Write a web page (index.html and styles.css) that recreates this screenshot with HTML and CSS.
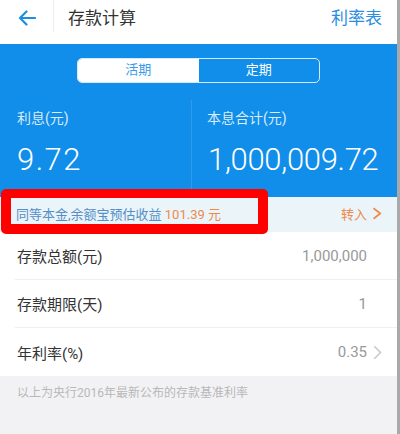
FILE: index.html
```html
<!DOCTYPE html>
<html lang="zh-CN">
<head>
<meta charset="utf-8">
<title>存款计算</title>
<link rel="stylesheet" href="styles.css">
</head>
<body>
<div class="page">
  <header class="topbar">
    <div class="back">
      <svg width="18" height="16" viewBox="0 0 18 16"><path d="M17 8H2M8.5 1.5L2 8l6.5 6.5" fill="none" stroke="#1a8fe6" stroke-width="2.2" stroke-linecap="round" stroke-linejoin="round"/></svg>
    </div>
    <div class="sep"></div>
    <div class="title">存款计算</div>
    <div class="rates">利率表</div>
  </header>

  <section class="hero">
    <div class="toggle">
      <div class="seg active">活期</div>
      <div class="seg">定期</div>
    </div>
    <div class="stats">
      <div class="stat left">
        <div class="stat-label">利息(元)</div>
        <div class="stat-value small">9.72</div>
      </div>
      <div class="stat right">
        <div class="stat-label">本息合计(元)</div>
        <div class="stat-value big">1,000,009.72</div>
      </div>
    </div>
  </section>

  <div class="infobar">
    <div class="info-text">同等本金,余额宝预估收益 <span class="orange">101.39 元</span></div>
    <div class="transfer">转入
      <svg width="10" height="13" viewBox="0 0 10 13"><path d="M1.5 1.2L8.3 6.5 1.5 11.8" fill="none" stroke="#ee8a4e" stroke-width="1.8" stroke-linejoin="round"/></svg>
    </div>
  </div>

  <div class="rows">
    <div class="row">
      <span class="label">存款总额(元)</span>
      <span class="value">1,000,000</span>
      <span class="chev"></span>
    </div>
    <div class="row">
      <span class="label">存款期限(天)</span>
      <span class="value">1</span>
      <span class="chev"></span>
    </div>
    <div class="row">
      <span class="label">年利率(%)</span>
      <span class="value">0.35</span>
      <span class="chev"><svg width="9" height="15" viewBox="0 0 9 15"><path d="M1.3 1.3L7.5 7.5 1.3 13.7" fill="none" stroke="#c9c9c9" stroke-width="1.6"/></svg></span>
    </div>
  </div>

  <div class="note">以上为央行2016年最新公布的存款基准利率</div>

  <div class="highlight"></div>
</div>
</body>
</html>
```

FILE: styles.css
```css
html, body {
  margin: 0;
  padding: 0;
  background: #f2f2f4;
}

body {
  font-family: Roboto, "Noto Sans CJK SC", sans-serif;
  width: 400px;
  height: 434px;
  overflow: hidden;
}

.page {
  position: relative;
  width: 397px;
  height: 434px;
  border-right: 3px solid #a9a9a9;
  background: #f2f2f4;
}

.topbar {
  height: 44px;
  background: #fff;
  display: flex;
  align-items: flex-start;
}

.back {
  width: 53px;
  height: 36px;
  display: flex;
  align-items: center;
  padding-left: 18px;
  box-sizing: border-box;
}

.sep {
  width: 1px;
  height: 32px;
  background: #ececec;
}

.title {
  margin-left: 14px;
  height: 36px;
  line-height: 36px;
  font-size: 17px;
  color: #333;
}

.rates {
  margin-left: auto;
  margin-right: 15px;
  height: 36px;
  line-height: 36px;
  font-size: 17px;
  color: #2b8ee0;
}

.hero {
  background: #108ee9;
  height: 153px;
  box-sizing: border-box;
  padding-top: 14px;
}

.toggle {
  width: 243px;
  height: 25px;
  margin: 0 auto;
  box-sizing: border-box;
  border: 1.5px solid rgba(235, 245, 255, 0.9);
  border-radius: 5px;
  display: flex;
  overflow: hidden;
}

.seg {
  flex: 1;
  text-align: center;
  font-size: 13px;
  line-height: 22px;
  color: #fff;
}

.seg.active {
  background: #fff;
  color: #3b9be8;
}

.stats {
  display: flex;
  margin-top: 17px;
  height: 97px;
}

.stat {
  box-sizing: border-box;
  padding-top: 8px;
}

.stat.left {
  width: 192px;
  padding-left: 17px;
  border-right: 1px solid rgba(255, 255, 255, 0.13);
}

.stat.right {
  flex: 1;
  padding-left: 15px;
}

.stat-label {
  font-size: 14px;
  line-height: 20px;
  color: rgba(255, 255, 255, 0.85);
}

.stat-value {
  margin-top: 14px;
  font-size: 31px;
  line-height: 36px;
  font-weight: 300;
  color: #fff;
}

.stat-value.small {
  letter-spacing: 1.5px;
}

.stat-value.big {
  letter-spacing: -0.3px;
  margin-left: 1px;
}

.infobar {
  height: 35px;
  background: #ebf4f8;
  display: flex;
  align-items: center;
  padding: 0 15px 0 16px;
}

.info-text {
  font-size: 13px;
  color: #5490c8;
  padding-bottom: 2px;
}

.orange {
  color: #ee8a4e;
}

.transfer {
  margin-left: auto;
  font-size: 13px;
  color: #ee8a4e;
  display: flex;
  align-items: center;
  gap: 5px;
  padding-bottom: 2px;
}

.rows {
  background: #fff;
}

.row {
  height: 48px;
  margin-left: 15px;
  padding: 0 15px 0 2px;
  display: flex;
  align-items: center;
  border-bottom: 1px solid #f0f0f0;
  box-sizing: border-box;
}

.row:last-child {
  border-bottom: none;
}

.label {
  font-size: 15px;
  color: #333;
}

.value {
  margin-left: auto;
  font-size: 15px;
  color: #999;
}

.chev {
  width: 15px;
  display: flex;
  justify-content: flex-end;
  align-items: center;
}

.note {
  padding: 9px 17px 0;
  font-size: 12px;
  line-height: 17px;
  color: #b8b8b8;
}

.highlight {
  position: absolute;
  left: 1px;
  top: 189px;
  width: 267px;
  height: 45px;
  box-sizing: border-box;
  border: 10px solid #ff0000;
  border-top-width: 9px;
  border-radius: 5px;
}
```
